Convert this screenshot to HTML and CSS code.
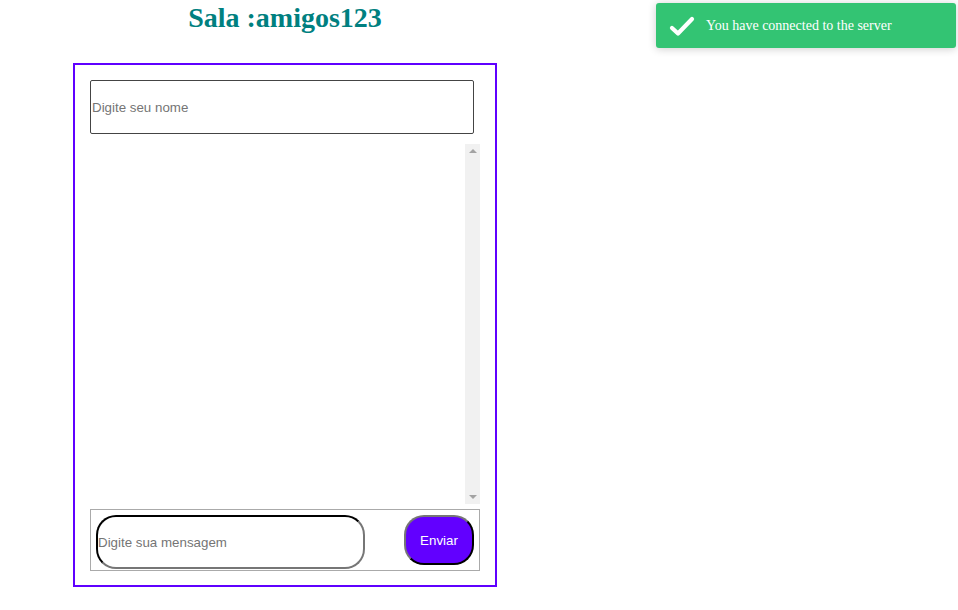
FILE: index.html
```html
<!DOCTYPE html>
<html>
<head>
<meta charset="utf-8">
<link rel="stylesheet" href="styles.css">
</head>
<body>
<div class="app">
  <h1 class="title">Sala :amigos123</h1>
  <div class="chat">
    <input class="name" type="text" placeholder="Digite seu nome">
    <div class="messages">
      <div class="list"></div>
      <div class="scrollbar">
        <span class="arrow up"></span>
        <span class="arrow down"></span>
      </div>
    </div>
    <form class="send">
      <input class="msg" type="text" placeholder="Digite sua mensagem">
      <button class="btn" type="button">Enviar</button>
    </form>
  </div>
</div>
<div class="toast">
  <svg class="check" width="26" height="22" viewBox="0 0 26 22"><path d="M3 13 L9 18.5 L23 4" fill="none" stroke="#fff" stroke-width="4.2" stroke-linecap="round" stroke-linejoin="round"/></svg>
  <span class="toast-text">You have connected to the server</span>
</div>
</body>
</html>
```
FILE: styles.css
```css
html, body { margin: 0; padding: 0; background: #fff; }
body { font-family: "Liberation Serif", serif; }
.app { width: 424px; margin-left: 73px; }
.title {
  margin: 2px 0 30px;
  font-size: 28px;
  font-weight: bold;
  color: #008080;
  text-align: center;
  line-height: 31px;
}
.chat {
  border: 2px solid #5f00ff;
  padding: 15px 15px 14px;
  display: flex;
  flex-direction: column;
}
.name {
  box-sizing: border-box;
  width: 384px;
  height: 54px;
  margin: 0 0 10px;
  border: 1px solid #444;
  border-radius: 2px;
  padding: 0 1px;
  font-family: "Liberation Sans", sans-serif;
  font-size: 13.333px;
  outline: none;
}
.name::placeholder, .msg::placeholder { color: #757575; }
.messages {
  height: 360px;
  margin-bottom: 5px;
  display: flex;
}
.list { flex: 1; }
.scrollbar {
  width: 15px;
  background: #f1f1f1;
  display: flex;
  flex-direction: column;
  justify-content: space-between;
  align-items: center;
  padding: 5px 0;
  box-sizing: border-box;
}
.arrow {
  width: 0;
  height: 0;
  border-left: 4px solid transparent;
  border-right: 4px solid transparent;
}
.arrow.up { border-bottom: 4px solid #a3a3a3; }
.arrow.down { border-top: 4px solid #a3a3a3; }
.send {
  margin: 0;
  border: 1px solid #aaa;
  padding: 5px 5px 1px;
  display: flex;
  justify-content: space-between;
  align-items: flex-start;
}
.msg {
  box-sizing: border-box;
  width: 269px;
  height: 54px;
  border: 2px inset #767676;
  border-top-color: #222;
  border-left-color: #222;
  border-radius: 20px;
  padding: 0;
  font-family: "Liberation Sans", sans-serif;
  font-size: 13.333px;
  outline: none;
}
.btn {
  box-sizing: border-box;
  width: 70px;
  height: 50px;
  background: #6200ff;
  color: #fff;
  border: 2px outset #767676;
  border-bottom-color: #222;
  border-right-color: #222;
  border-radius: 20px;
  font-family: "Liberation Sans", sans-serif;
  font-size: 13.333px;
  padding: 0;
}
.toast {
  position: absolute;
  top: 3px;
  left: 656px;
  width: 300px;
  height: 45px;
  box-sizing: border-box;
  background: #33c473;
  border-radius: 3px;
  box-shadow: 0 1px 8px rgba(0,0,0,0.2);
  display: flex;
  align-items: center;
  padding-left: 13px;
}
.check { display: block; margin-right: 11px; }
.toast-text {
  color: #fff;
  font-family: "Liberation Serif", serif;
  font-size: 14px;
}
```
